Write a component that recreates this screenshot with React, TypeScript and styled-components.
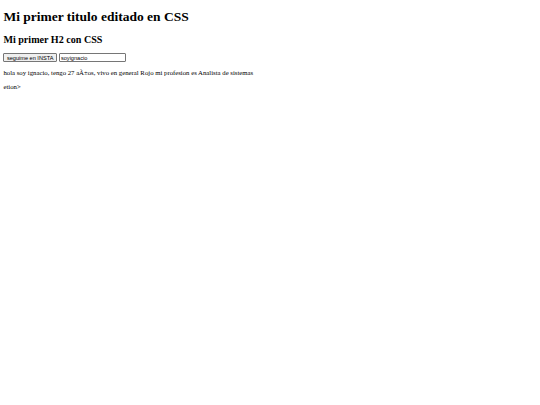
import React from 'react'
import styled, { createGlobalStyle } from 'styled-components'

// the reference is a plain page shown at about 0.42 scale, so sizes are scaled by hand
const GlobalStyle = createGlobalStyle`
  html {
    background: #ffffff;
  }
  body {
    margin: 0;
    padding: 0 3.4px;
    font-family: 'Liberation Serif', 'Times New Roman', serif;
    font-size: 6.75px;
    color: #000000;
  }
`

const Title = styled.h1`
  font-size: 13.5px;
  line-height: 15.5px;
  font-weight: bold;
  margin: 9px 0;
`

const Subtitle = styled.h2`
  font-size: 10.1px;
  line-height: 11.6px;
  font-weight: bold;
  margin: 8.4px 0;
`

const SocialRow = styled.div`
  display: flex;
  align-items: center;
  gap: 2px;
  height: 9px;
`

const InstaButton = styled.button`
  font-family: 'Liberation Sans', Arial, sans-serif;
  font-size: 5.6px;
  line-height: 6.5px;
  height: 9px;
  padding: 0 2.5px;
  border: 1px solid #767676;
  border-radius: 1px;
  background: #efefef;
  color: #000000;
`

const UserInput = styled.input`
  font-family: 'Liberation Sans', Arial, sans-serif;
  font-size: 5.6px;
  width: 67px;
  height: 9px;
  box-sizing: border-box;
  padding: 0 1px;
  border: 1px solid #767676;
  border-radius: 1px;
  color: #000000;
`

const Text = styled.p`
  line-height: 7.75px;
  margin: 6.5px 0;
`

export default function App() {
  return (
    <>
      <GlobalStyle />
      <Title>Mi primer titulo editado en CSS</Title>
      <Subtitle>Mi primer H2 con CSS</Subtitle>
      <SocialRow>
        <InstaButton type="button">seguime en INSTA</InstaButton>
        <UserInput type="text" defaultValue="soyignacio" />
      </SocialRow>
      <Text>
        hola soy ignacio, tengo 27 aÃ±os, vivo en general Rojo mi profesion es Analista de sistemas
      </Text>
      <Text>etion&gt;</Text>
    </>
  )
}
